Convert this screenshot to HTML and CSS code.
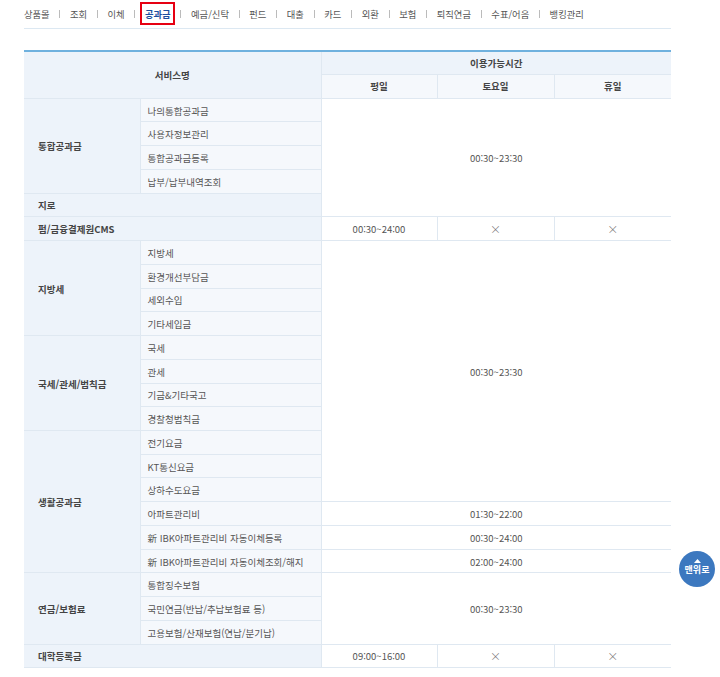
FILE: index.html
```html
<!DOCTYPE html>
<html lang="ko">
<head>
<meta charset="utf-8">
<title>이용가능시간</title>
<link rel="stylesheet" href="styles.css">
</head>
<body>
<nav class="tabs">
  <a class="tab">상품몰</a><i class="sep"></i>
  <a class="tab">조회</a><i class="sep"></i>
  <a class="tab">이체</a><i class="sep"></i>
  <a class="tab active">공과금</a><i class="sep"></i>
  <a class="tab">예금/신탁</a><i class="sep"></i>
  <a class="tab">펀드</a><i class="sep"></i>
  <a class="tab">대출</a><i class="sep"></i>
  <a class="tab">카드</a><i class="sep"></i>
  <a class="tab">외환</a><i class="sep"></i>
  <a class="tab">보험</a><i class="sep"></i>
  <a class="tab">퇴직연금</a><i class="sep"></i>
  <a class="tab">수표/어음</a><i class="sep"></i>
  <a class="tab">뱅킹관리</a>
</nav>
<table class="hours">
  <colgroup>
    <col class="c1"><col class="c2"><col class="c3"><col class="c4"><col class="c5">
  </colgroup>
  <thead>
    <tr><th class="group" colspan="2" rowspan="2">서비스명</th><th class="group" colspan="3">이용가능시간</th></tr>
    <tr><th class="sub">평일</th><th class="sub">토요일</th><th class="sub">휴일</th></tr>
  </thead>
  <tbody>
    <tr><th class="cat" rowspan="4">통합공과금</th><td class="svc">나의통합공과금</td><td colspan="3" rowspan="5">00:30~23:30</td></tr>
    <tr><td class="svc">사용자정보관리</td></tr>
    <tr><td class="svc">통합공과금등록</td></tr>
    <tr><td class="svc">납부/납부내역조회</td></tr>
    <tr><th class="cat" colspan="2">지로</th></tr>
    <tr><th class="cat" colspan="2">펌/금융결제원CMS</th><td>00:30~24:00</td><td class="no">×</td><td class="no">×</td></tr>
    <tr><th class="cat" rowspan="4">지방세</th><td class="svc">지방세</td><td colspan="3" rowspan="11">00:30~23:30</td></tr>
    <tr><td class="svc">환경개선부담금</td></tr>
    <tr><td class="svc">세외수입</td></tr>
    <tr><td class="svc">기타세입금</td></tr>
    <tr><th class="cat" rowspan="4">국세/관세/범칙금</th><td class="svc">국세</td></tr>
    <tr><td class="svc">관세</td></tr>
    <tr><td class="svc">기금&amp;기타국고</td></tr>
    <tr><td class="svc">경찰청범칙금</td></tr>
    <tr><th class="cat" rowspan="6">생활공과금</th><td class="svc">전기요금</td></tr>
    <tr><td class="svc">KT통신요금</td></tr>
    <tr><td class="svc">상하수도요금</td></tr>
    <tr><td class="svc">아파트관리비</td><td colspan="3">01:30~22:00</td></tr>
    <tr><td class="svc">新 IBK아파트관리비 자동이체등록</td><td colspan="3">00:30~24:00</td></tr>
    <tr><td class="svc">新 IBK아파트관리비 자동이체조회/해지</td><td colspan="3">02:00~24:00</td></tr>
    <tr><th class="cat" rowspan="3">연금/보험료</th><td class="svc">통합징수보험</td><td colspan="3" rowspan="3">00:30~23:30</td></tr>
    <tr><td class="svc">국민연금(반납/추납보험료 등)</td></tr>
    <tr><td class="svc">고용보험/산재보험(연납/분기납)</td></tr>
    <tr><th class="cat" colspan="2">대학등록금</th><td>09:00~16:00</td><td class="no">×</td><td class="no">×</td></tr>
  </tbody>
</table>
<a class="top-btn"><svg class="top-arrow" width="7" height="4" viewBox="0 0 7 4"><path d="M3.5 0 7 4H0z" fill="#fff"/></svg><span>맨위로</span></a>
</body>
</html>
```
FILE: styles.css
```css
html, body { margin: 0; padding: 0; background: #fff; }
body {
  position: relative;
  width: 720px;
  height: 677px;
  overflow: hidden;
  font-family: "Noto Sans CJK KR", "Noto Sans", sans-serif;
  font-size: 9.5px;
  color: #555;
}
.tabs {
  display: flex;
  align-items: center;
  gap: 9.7px;
  width: 647px;
  height: 28px;
  margin-left: 24px;
  border-bottom: 1px solid #dce8f2;
  font-size: 9.3px;
  color: #555;
}
.tab { position: relative; line-height: 14px; white-space: nowrap; }
.tab.active { color: #1d4f9f; font-weight: 700; }
.tab.active::after {
  content: "";
  position: absolute;
  left: -5px; right: -4px; top: -5px; bottom: -4px;
  border: 2px solid #e60012;
}
.sep { width: 1px; height: 8px; background: #bbb; }
.hours {
  margin: 21px 0 0 24px;
  width: 647px;
  table-layout: fixed;
  border-collapse: collapse;
  border-top: 2px solid #6fb1de;
}
.c1 { width: 116px; } .c2 { width: 181px; } .c3 { width: 116px; } .c4 { width: 117px; } .c5 { width: 117px; }
.hours thead tr { height: 23.6px; }
.hours tbody tr { height: 23.74px; }
.hours th, .hours td {
  padding: 0;
  border: 1px solid #dfe8f1;
  text-align: center;
  font-weight: 400;
  line-height: 12px;
}
.hours tbody th, .hours tbody td { padding-top: 1px; }
.hours tr > :first-child { border-left: 0; }
.hours tr > :last-child { border-right: 0; }
.hours th.group { background: #edf3fa; font-weight: 700; color: #444; }
.hours th.sub { background: #f5f8fc; font-weight: 700; color: #444; }
.hours th.cat { background: #edf3fa; font-weight: 700; color: #444; text-align: left; padding-left: 14px; }
.hours td.svc { background: #f5f8fc; text-align: left; padding-left: 7px; }
.hours td.no { font-size: 11px; font-weight: 300; color: #666; }
.top-btn {
  position: absolute;
  left: 679px; top: 551px;
  width: 36px; height: 36px;
  padding-bottom: 5px;
  box-sizing: border-box;
  border-radius: 50%;
  background: #3c78bf;
  color: #fff;
  font-weight: 700;
  font-size: 9px;
  display: flex;
  flex-direction: column;
  align-items: center;
  justify-content: center;
  gap: 1px;
  line-height: 11px;
}
.top-arrow { display: block; }
```
